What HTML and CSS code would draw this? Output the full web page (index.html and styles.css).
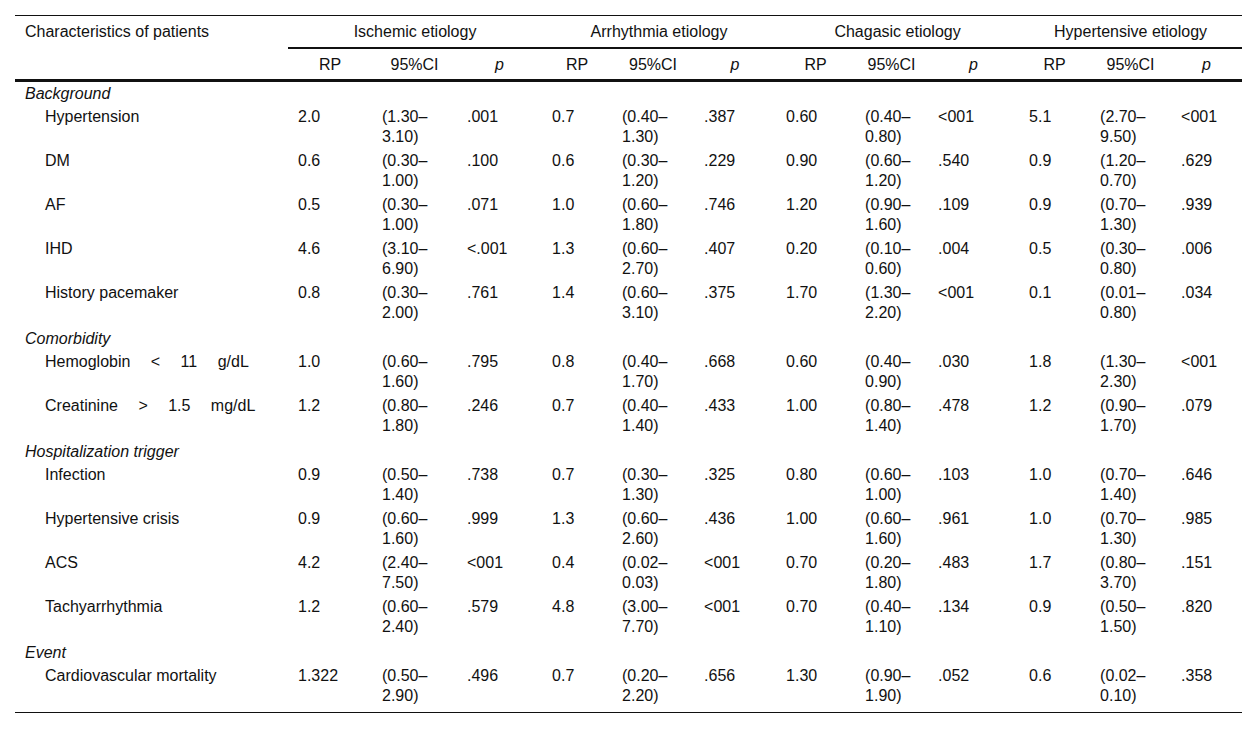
FILE: index.html
```html
<!DOCTYPE html>
<html lang="en">
<head>
<meta charset="utf-8">
<title>Characteristics of patients by etiology</title>
<link rel="stylesheet" href="styles.css">
</head>
<body>
<div class="wrap">
<table class="data">
  <colgroup>
    <col class="c-label">
    <col class="c-rp1"><col class="c-ci1"><col class="c-p1">
    <col class="c-rp2"><col class="c-ci2"><col class="c-p2">
    <col class="c-rp3"><col class="c-ci3"><col class="c-p3">
    <col class="c-rp4"><col class="c-ci4"><col class="c-p4">
  </colgroup>
  <thead>
    <tr class="h1">
      <th class="label" rowspan="2">Characteristics of patients</th>
      <th class="group" colspan="3">Ischemic etiology</th>
      <th class="group" colspan="3">Arrhythmia etiology</th>
      <th class="group" colspan="3">Chagasic etiology</th>
      <th class="group" colspan="3">Hypertensive etiology</th>
    </tr>
    <tr class="h2">
      <th>RP</th><th>95%CI</th><th><i>p</i></th>
      <th>RP</th><th>95%CI</th><th><i>p</i></th>
      <th>RP</th><th>95%CI</th><th><i>p</i></th>
      <th>RP</th><th>95%CI</th><th><i>p</i></th>
    </tr>
  </thead>
  <tbody>
    <tr class="section first"><td colspan="13">Background</td></tr>
    <tr><td class="item">Hypertension</td><td>2.0</td><td>(1.30–3.10)</td><td>.001</td><td>0.7</td><td>(0.40–1.30)</td><td>.387</td><td>0.60</td><td>(0.40–0.80)</td><td>&lt;001</td><td>5.1</td><td>(2.70–9.50)</td><td>&lt;001</td></tr>
    <tr><td class="item">DM</td><td>0.6</td><td>(0.30–1.00)</td><td>.100</td><td>0.6</td><td>(0.30–1.20)</td><td>.229</td><td>0.90</td><td>(0.60–1.20)</td><td>.540</td><td>0.9</td><td>(1.20–0.70)</td><td>.629</td></tr>
    <tr><td class="item">AF</td><td>0.5</td><td>(0.30–1.00)</td><td>.071</td><td>1.0</td><td>(0.60–1.80)</td><td>.746</td><td>1.20</td><td>(0.90–1.60)</td><td>.109</td><td>0.9</td><td>(0.70–1.30)</td><td>.939</td></tr>
    <tr><td class="item">IHD</td><td>4.6</td><td>(3.10–6.90)</td><td>&lt;.001</td><td>1.3</td><td>(0.60–2.70)</td><td>.407</td><td>0.20</td><td>(0.10–0.60)</td><td>.004</td><td>0.5</td><td>(0.30–0.80)</td><td>.006</td></tr>
    <tr><td class="item">History pacemaker</td><td>0.8</td><td>(0.30–2.00)</td><td>.761</td><td>1.4</td><td>(0.60–3.10)</td><td>.375</td><td>1.70</td><td>(1.30–2.20)</td><td>&lt;001</td><td>0.1</td><td>(0.01–0.80)</td><td>.034</td></tr>
    <tr class="section"><td colspan="13">Comorbidity</td></tr>
    <tr><td class="item spaced-a">Hemoglobin &lt; 11 g/dL</td><td>1.0</td><td>(0.60–1.60)</td><td>.795</td><td>0.8</td><td>(0.40–1.70)</td><td>.668</td><td>0.60</td><td>(0.40–0.90)</td><td>.030</td><td>1.8</td><td>(1.30–2.30)</td><td>&lt;001</td></tr>
    <tr><td class="item spaced-b">Creatinine &gt; 1.5 mg/dL</td><td>1.2</td><td>(0.80–1.80)</td><td>.246</td><td>0.7</td><td>(0.40–1.40)</td><td>.433</td><td>1.00</td><td>(0.80–1.40)</td><td>.478</td><td>1.2</td><td>(0.90–1.70)</td><td>.079</td></tr>
    <tr class="section"><td colspan="13">Hospitalization trigger</td></tr>
    <tr><td class="item">Infection</td><td>0.9</td><td>(0.50–1.40)</td><td>.738</td><td>0.7</td><td>(0.30–1.30)</td><td>.325</td><td>0.80</td><td>(0.60–1.00)</td><td>.103</td><td>1.0</td><td>(0.70–1.40)</td><td>.646</td></tr>
    <tr><td class="item">Hypertensive crisis</td><td>0.9</td><td>(0.60–1.60)</td><td>.999</td><td>1.3</td><td>(0.60–2.60)</td><td>.436</td><td>1.00</td><td>(0.60–1.60)</td><td>.961</td><td>1.0</td><td>(0.70–1.30)</td><td>.985</td></tr>
    <tr><td class="item">ACS</td><td>4.2</td><td>(2.40–7.50)</td><td>&lt;001</td><td>0.4</td><td>(0.02–0.03)</td><td>&lt;001</td><td>0.70</td><td>(0.20–1.80)</td><td>.483</td><td>1.7</td><td>(0.80–3.70)</td><td>.151</td></tr>
    <tr><td class="item">Tachyarrhythmia</td><td>1.2</td><td>(0.60–2.40)</td><td>.579</td><td>4.8</td><td>(3.00–7.70)</td><td>&lt;001</td><td>0.70</td><td>(0.40–1.10)</td><td>.134</td><td>0.9</td><td>(0.50–1.50)</td><td>.820</td></tr>
    <tr class="section"><td colspan="13">Event</td></tr>
    <tr class="last"><td class="item">Cardiovascular mortality</td><td>1.322</td><td>(0.50–2.90)</td><td>.496</td><td>0.7</td><td>(0.20–2.20)</td><td>.656</td><td>1.30</td><td>(0.90–1.90)</td><td>.052</td><td>0.6</td><td>(0.02–0.10)</td><td>.358</td></tr>
  </tbody>
</table>
</div>
</body>
</html>
```

FILE: styles.css
```css
html, body {
  margin: 0;
  padding: 0;
  background: #ffffff;
}

.wrap {
  padding: 15px 0 0 15px;
}

.data {
  border-collapse: separate;
  border-spacing: 0;
  table-layout: fixed;
  width: 1227px;
  font-family: "Liberation Sans", Arial, Helvetica, sans-serif;
  font-size: 16px;
  line-height: 20px;
  color: #111111;
}

.c-label { width: 273px; }
.c-rp1 { width: 84px; }
.c-ci1 { width: 85px; }
.c-p1 { width: 85px; }
.c-rp2 { width: 70px; }
.c-ci2 { width: 82px; }
.c-p2 { width: 82px; }
.c-rp3 { width: 79px; }
.c-ci3 { width: 73px; }
.c-p3 { width: 91px; }
.c-rp4 { width: 71px; }
.c-ci4 { width: 81px; }
.c-p4 { width: 71px; }

.data th {
  font-weight: normal;
  text-align: center;
  vertical-align: middle;
}

.h1 th {
  border-top: 1px solid #111111;
  padding: 6px 10px 5px;
}

.h1 th.group {
  border-bottom: 2px solid #111111;
}

.h1 th.label {
  text-align: left;
  vertical-align: top;
  border-bottom: 3px solid #111111;
}

.h2 th {
  padding: 6px 10px 4px;
  border-bottom: 3px solid #111111;
}

.data td {
  text-align: left;
  vertical-align: top;
  padding: 2px 10px;
}

.data tr.section td {
  font-style: italic;
  padding: 4px 10px 1px;
}

.data tr.section.first td {
  padding: 2px 10px 1px;
}

.data td.item {
  padding-left: 30px;
}

.spaced-a { word-spacing: 16px; }
.spaced-b { word-spacing: 16px; }

.data tr.last td {
  padding-bottom: 6px;
  border-bottom: 1px solid #111111;
}
```
